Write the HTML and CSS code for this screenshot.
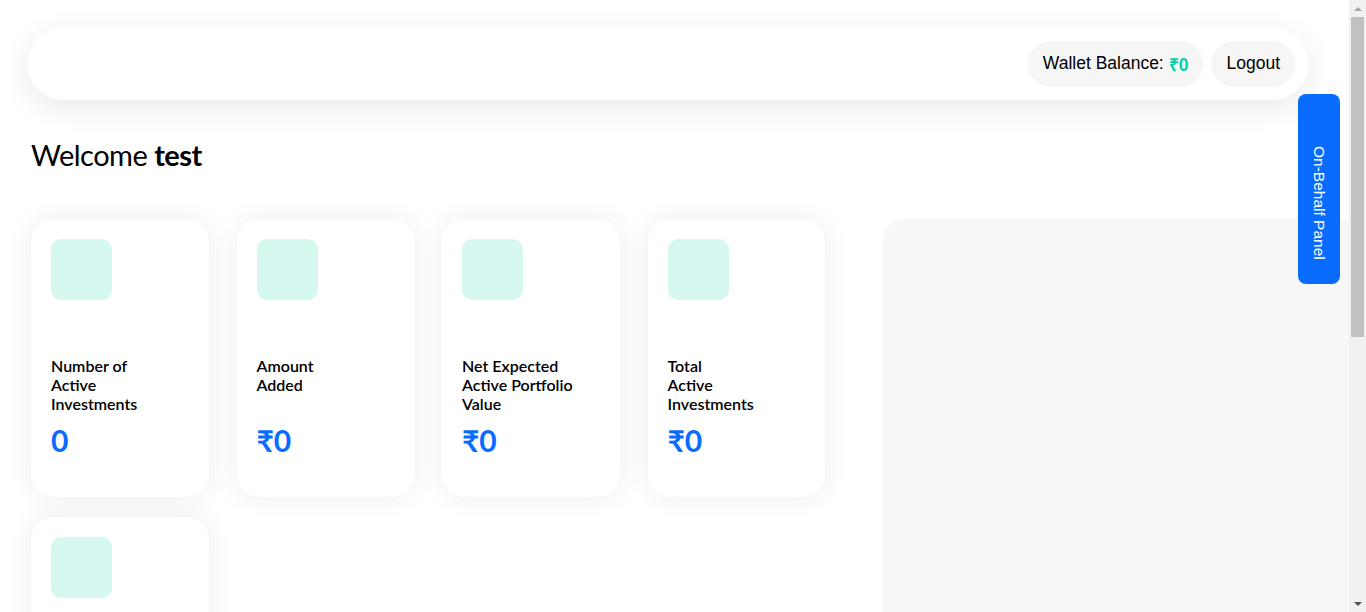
FILE: index.html
```html
<!DOCTYPE html>
<html lang="en">
<head>
<meta charset="utf-8">
<title>Dashboard</title>
<link rel="stylesheet" href="styles.css">
</head>
<body>
<header class="topbar">
  <div class="pill">Wallet Balance: <b class="teal">₹0</b></div>
  <div class="pill">Logout</div>
</header>
<h1 class="welcome">Welcome <b>test</b></h1>
<main class="main">
  <section class="cards">
    <div class="card"><div class="ico"></div><div class="label">Number of<br>Active<br>Investments</div><div class="value">0</div></div>
    <div class="card"><div class="ico"></div><div class="label">Amount<br>Added</div><div class="value">₹0</div></div>
    <div class="card"><div class="ico"></div><div class="label">Net Expected<br>Active Portfolio<br>Value</div><div class="value">₹0</div></div>
    <div class="card"><div class="ico"></div><div class="label">Total<br>Active<br>Investments</div><div class="value">₹0</div></div>
    <div class="card"><div class="ico"></div></div>
  </section>
  <aside class="panel"></aside>
</main>
<button class="behalf">On-Behalf Panel</button>
<div class="scrollbar" aria-hidden="true">
  <div class="sb-btn"><span class="arrow-up"></span></div>
  <div class="sb-thumb"></div>
  <div class="sb-space"></div>
  <div class="sb-btn"><span class="arrow-down"></span></div>
</div>
</body>
</html>
```
FILE: styles.css
```css
html { overflow: hidden; }
html, body { margin: 0; padding: 0; background: #fff; }
body { font-family: Lato, "Liberation Sans", sans-serif; color: #000; min-height: 1105px; padding-right: 17px; }
.scrollbar {
  position: fixed;
  top: 0;
  right: 0;
  width: 17px;
  height: 100vh;
  background: #f1f1f1;
  display: flex;
  flex-direction: column;
}
.sb-btn {
  height: 17px;
  display: flex;
  align-items: center;
  justify-content: center;
}
.arrow-up {
  width: 0; height: 0;
  border-left: 4px solid transparent;
  border-right: 4px solid transparent;
  border-bottom: 4px solid #a3a3a3;
}
.arrow-down {
  width: 0; height: 0;
  border-left: 4px solid transparent;
  border-right: 4px solid transparent;
  border-top: 4px solid #505050;
}
.sb-thumb {
  height: 320px;
  margin: 0 2px;
  background: #c1c1c1;
}
.sb-space { flex: 1; }
.topbar {
  margin: 27px 40px 0 27px;
  height: 73px;
  box-sizing: border-box;
  background: #fff;
  border-radius: 37px;
  box-shadow: 0 8px 30px rgba(0,0,0,0.09);
  display: flex;
  justify-content: flex-end;
  align-items: center;
  gap: 8px;
  padding: 0 14px;
}
.pill {
  font-family: "Liberation Sans", Arial, sans-serif;
  font-size: 17.5px;
  height: 46px;
  display: flex;
  align-items: center;
  padding: 0 15px;
  background: #f6f6f6;
  border-radius: 23px;
  color: #000;
}
.pill b { margin-left: 5px; }
.teal { color: #00d4a6; }
.welcome {
  margin: 37px 0 0 31px;
  font-size: 29px;
  font-weight: 400;
  line-height: 36px;
  letter-spacing: -0.5px;
}
.welcome b { font-weight: 700; }
.main {
  display: flex;
  gap: 58px;
  padding-left: 31px;
  margin-top: 46px;
}
.cards {
  display: grid;
  grid-template-columns: repeat(4, 177.5px);
  column-gap: 28px;
  row-gap: 20px;
  align-content: start;
  padding-bottom: 40px;
}
.card {
  height: 278px;
  box-sizing: border-box;
  background: #fff;
  border-radius: 22px;
  box-shadow: 0 0 28px rgba(0,0,0,0.07);
  padding: 20px;
  display: flex;
  flex-direction: column;
}
.ico {
  width: 61px;
  height: 61px;
  border-radius: 10px;
  background: #d7f8f0;
}
.label {
  margin-top: 56px;
  font-size: 16px;
  font-weight: 600;
  line-height: 19px;
  min-height: 57px;
  color: #000;
}
.value {
  margin-top: 9px;
  font-size: 30px;
  line-height: 36px;
  font-weight: 700;
  color: #0a6cff;
}
.panel {
  flex: 1;
  height: 600px;
  background: #f7f7f7;
  border-radius: 22px 0 0 0;
}
.behalf {
  position: fixed;
  top: 94px;
  right: 26px;
  width: 42px;
  height: 190px;
  border: none;
  border-radius: 8px;
  background: #0a6cff;
  color: #fff;
  font-family: "Liberation Sans", Arial, sans-serif;
  font-size: 15.5px;
  writing-mode: vertical-rl;
  padding: 28px 0 0 0;
  display: flex;
  align-items: center;
  justify-content: center;
}
```
